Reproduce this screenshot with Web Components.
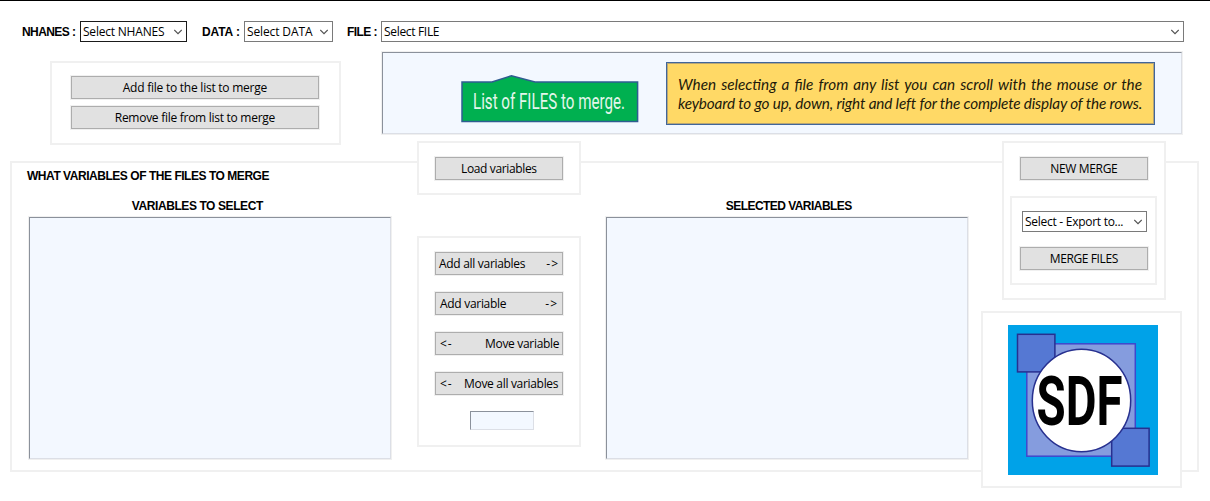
<!DOCTYPE html>
<html lang="en">
<head>
<meta charset="utf-8">
<title>Merge files</title>
<style>
html, body { margin: 0; height: 100%; background: #fff; overflow: hidden; }
</style>
</head>
<body>
<merge-app></merge-app>
<script>
const define = (name, html, connected) => {
  const tpl = document.createElement('template');
  tpl.innerHTML = html.trim();
  customElements.define(name, class extends HTMLElement {
    constructor() {
      super();
      this.attachShadow({ mode: 'open' }).append(tpl.content.cloneNode(true));
    }
    connectedCallback() { if (connected) connected.call(this, this.shadowRoot); }
  });
};

/* Page layout */
define('merge-app', `
<style>
  :host { display: block; box-sizing: border-box; width: 1210px; height: 501px; border-top: 1px solid #000;
    font: 12px/16px "Open Sans", "Noto Sans", sans-serif; color: #000; background: #fff; }
  .filters { display: grid; grid-template-columns: 58px 107px 15px 42px 89px 14px 34px 803px; height: 21px; padding: 20px 0 0 22px; align-items: center; }
  .filters combo-box:nth-of-type(1) { --edge: #1a1a1a; }
  .filters .data { grid-column: 4; } .filters .file { grid-column: 7; }
  .files { display: flex; align-items: flex-start; margin: 9px 0 0 50px; height: 90px; }
  .file-actions { margin: 10px 40px 0 0; width: 291px; height: 84px; }
  .file-actions .stack { display: grid; gap: 7px; padding: 13px 20px 0 19px; }
  .file-list { width: 802px; height: 84px; }
  .notes { display: flex; align-items: flex-start; padding: 9px 0 0 78px; }
  .notes note-card { margin-left: 27px; }
  .work { display: grid; grid-template-columns: 10px 407px 164px 400px 21px 164px 16px 17px;
    grid-template-rows: 20px 34px 41px 64px 11px 161px 16px; }
  .frame { grid-area: 2 / 2 / 7 / 9; }
  .title { grid-area: 2 / 2 / 3 / 3; padding: 7px 0 0 17px; }
  .col { grid-row: 3 / 7; display: grid; grid-template-rows: 21px 244px; justify-items: center; align-content: start; width: 364px; }
  .col.left { grid-column: 2; margin-left: 18px; }
  .col.right { grid-column: 4 / 6; margin-left: 24px; }
  .col list-panel { width: 364px; height: 244px; }
  .col heading-text { padding-top: 3px; }
  .left heading-text { margin-right: 25px; }
  .right heading-text { margin-left: 4px; }
  .load { grid-area: 1 / 3 / 3 / 4; height: 54px; }
  .load push-button, .merge > push-button { margin: 14px 16px 0 16px; }
  .move { grid-area: 3 / 3 / 7 / 4; margin-top: 41px; height: 211px; }
  .move .stack { display: grid; gap: 17px; padding: 14px 16px 0 16px; }
  .move entry-field { margin: 16px 0 0 51px; }
  .merge { grid-area: 1 / 6 / 5 / 7; height: 159px; }
  .export { margin: 16px 0 0 6px; width: 147px; height: 89px; }
  .export combo-box { margin: 13px 0 0 10px; width: 125px; }
  .export push-button { margin: 15px 0 0 8px; width: 128px; }
  .brand { grid-area: 6 / 5 / 8 / 8; height: 177px; }
  .brand sdf-logo { margin: 12px 0 0 25px; }
</style>
<div class="filters">
  <heading-text fit="54">NHANES :</heading-text><combo-box fit="81.5">Select NHANES</combo-box>
  <heading-text class="data" fit="38">DATA :</heading-text><combo-box fit="65.500">Select DATA</combo-box>
  <heading-text class="file" fit="30.5">FILE :</heading-text><combo-box fit="55.500">Select FILE</combo-box>
</div>
<div class="files">
  <group-frame class="file-actions"><div class="stack">
    <push-button fit="144.5">Add file to the list to merge</push-button>
    <push-button fit="160.5">Remove file from list to merge</push-button>
  </div></group-frame>
  <list-panel class="file-list"><div class="notes">
    <file-callout></file-callout><note-card></note-card>
  </div></list-panel>
</div>
<div class="work">
  <group-frame class="frame"></group-frame>
  <div class="title"><heading-text fit="242.5">WHAT VARIABLES OF THE FILES TO MERGE</heading-text></div>
  <div class="col left"><heading-text fit="131.5">VARIABLES TO SELECT</heading-text><list-panel></list-panel></div>
  <div class="col right"><heading-text fit="126.5">SELECTED VARIABLES</heading-text><list-panel></list-panel></div>
  <group-frame class="load"><push-button fit="76">Load variables</push-button></group-frame>
  <group-frame class="move"><div class="stack">
    <push-button fit="86.5" style="--pad: 0 4px 0 3px">Add all variables<arrow-text slot="after">-&gt;</arrow-text></push-button>
    <push-button fit="66.5" style="--pad: 0 5px 0 4px">Add variable<arrow-text slot="after">-&gt;</arrow-text></push-button>
    <push-button fit="74.5" style="--pad: 0 2.500px 0 4px"><arrow-text slot="before">&lt;-</arrow-text>Move variable</push-button>
    <push-button fit="94.5" style="--pad: 0 3.500px 0 4px"><arrow-text slot="before">&lt;-</arrow-text>Move all variables</push-button>
  </div><entry-field></entry-field></group-frame>
  <group-frame class="merge">
    <push-button fit="67.5">NEW MERGE</push-button>
    <group-frame class="export">
      <combo-box fit="98.5">Select - Export to...</combo-box>
      <push-button fit="68.5">MERGE FILES</push-button>
    </group-frame>
  </group-frame>
  <group-frame class="brand"><sdf-logo></sdf-logo></group-frame>
</div>`);

/* Text spaced out to a given width, between letters or between words */
define('fit-text', `
<style>:host { display: block; } span { display: inline-block; white-space: pre; vertical-align: top; }</style><span><slot></slot></span>`,
function (root) {
  const width = parseFloat(this.getAttribute('width'));
  if (!width) return;
  const span = root.querySelector('span');
  const text = this.textContent;
  const extra = width - span.getBoundingClientRect().width;
  if (this.getAttribute('by') === 'word') {
    span.style.wordSpacing = extra / (text.split(' ').length - 1) + 'px';
  } else {
    const step = extra / (text.length - 1);
    span.style.letterSpacing = step + 'px';
    span.style.marginRight = -step + 'px';
  }
});

const fitted = function (root) {
  const fit = root.querySelector('.fit');
  const text = [...this.childNodes].filter(n => n.nodeType === 3).map(n => n.data).join('').trim();
  const el = document.createElement('fit-text');
  el.setAttribute('width', this.getAttribute('fit'));
  el.textContent = text;
  fit.replaceChildren(el);
};

define('heading-text', `
<style>:host { display: block; font: bold 12px/16px "Liberation Sans", Arial, sans-serif; }</style><div class="fit"></div>`, fitted);

define('arrow-text', `
<style>:host { display: block; letter-spacing: 1px; margin-right: -1px; }</style><slot></slot>`);

define('push-button', `
<style>
  :host { display: block; }
  div.face { box-sizing: border-box; height: 23px; border: 1px solid #adadad; background: #e1e1e1; box-shadow: 0 0 0 1px #f0f0f0;
    display: flex; align-items: center; justify-content: center; }
  :host([style]) div.face { justify-content: space-between; padding: var(--pad); }
</style>
<div class="face"><slot name="before"></slot><div class="fit"></div><slot name="after"></slot></div>`, fitted);

define('combo-box', `
<style>
  :host { box-sizing: border-box; height: 21px; border: 1px solid var(--edge, #7a7a7a); background: #fff;
    display: flex; align-items: center; justify-content: space-between; padding: 0 4px 0 2px; }
</style>
<div class="fit"></div>
<svg width="8" height="6" viewBox="0 0 8 6"><path d="M.3 1 4 4.7 7.7 1" fill="none" stroke="#505050" stroke-width="1.1"/></svg>`, fitted);

define('group-frame', `
<style>:host { display: flow-root; box-sizing: border-box; border: 2px solid #f0f0f0; background: #fff; }</style><slot></slot>`);

define('list-panel', `
<style>
  :host { display: block; box-sizing: border-box; border: 1px solid #f0f0f0; }
  div { box-sizing: border-box; height: 100%; border: 1px solid; border-color: #8b919b #dcdfe6 #dcdfe6 #8b919b; background: #f3f8ff; }
</style><div><slot></slot></div>`);

define('entry-field', `
<style>:host { display: block; box-sizing: border-box; width: 64px; height: 19px; border: 1px solid; border-color: #8b919b #dcdfe6 #dcdfe6 #8b919b; background: #f3f8ff; }</style>`);

define('file-callout', `
<style>:host { display: block; margin-top: 12px; } svg { display: block; overflow: visible; }</style>
<svg width="178" height="49" viewBox="461 74 178 49">
  <path d="M462 82H492L511.500 75.700 535 82H637.600V121.400H462Z" fill="#00b050" stroke="#2f5c91" stroke-width="1.5"/>
  <text x="473" y="109" font-family="Roboto" font-size="21.500" fill="#e4f6eb" textLength="152" lengthAdjust="spacingAndGlyphs">List of FILES to merge.</text>
</svg>`);

define('note-card', `
<style>
  :host { box-sizing: border-box; display: block; width: 489px; height: 63px; padding: 12px 0 0 11px;
    background: #ffd966; border: 1px solid #41669a; box-shadow: inset 0 0 0 1px #b8a674; font: italic 400 15.300px/18.500px Lato, sans-serif; color: #1d190a; }
  fit-text { height: 18.500px; }
</style>
<fit-text width="464" by="word">When selecting a file from any list you can scroll with the mouse or the</fit-text>
<fit-text width="464">keyboard to go up, down, right and left for the complete display of the rows.</fit-text>`);

define('sdf-logo', `
<style>:host { display: block; width: 150px; height: 150px; } svg { display: block; overflow: visible; }</style>
<svg width="150" height="150" viewBox="0 0 150 150">
  <path fill="#00a2e8" d="M0 0H150V150H0Z"/>
  <rect x="18.800" y="18.800" width="108.500" height="112.400" fill="#859cde" stroke="#3f48cc" stroke-width="1.500"/>
  <g fill="#5578d3" stroke="#27308f" stroke-width="1.500">
    <rect x="9.500" y="9.300" width="37.400" height="37.600"/>
    <rect x="103.700" y="103.300" width="37.400" height="37.800"/>
  </g>
  <ellipse cx="73.500" cy="75.500" rx="49.200" ry="51.200" fill="#fff" stroke="#27308f" stroke-width="1.500"/>
  <text x="28.500" y="100" font-family="Roboto" font-weight="700" font-size="69" textLength="86" lengthAdjust="spacingAndGlyphs">SDF</text>
</svg>`);
</script>
</body>
</html>
